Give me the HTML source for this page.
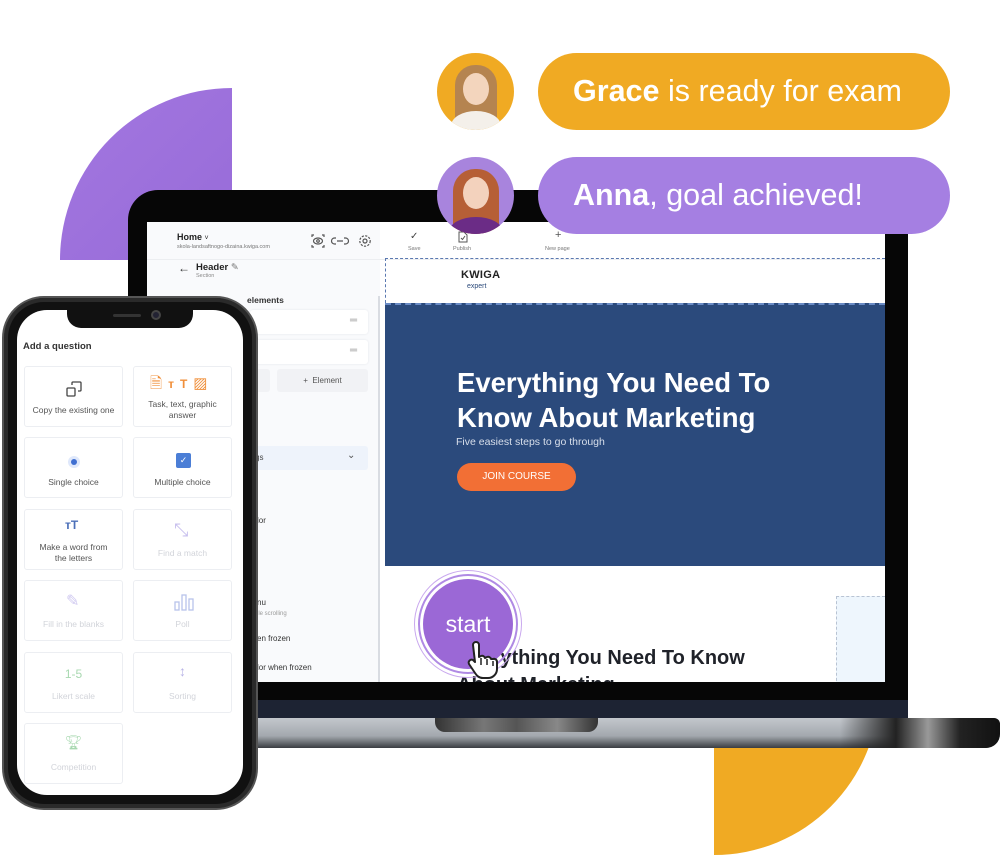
<!DOCTYPE html>
<html><head><meta charset="utf-8"><style>
*{margin:0;padding:0;box-sizing:border-box}
body{width:1000px;height:853px;background:#fff;position:relative;overflow:hidden;font-family:"Liberation Sans",sans-serif}
.a{position:absolute}
.t{position:absolute;white-space:nowrap}
.card{position:absolute;width:99px;height:61px;border:1px solid #eceef2;border-radius:3px;background:#fff;text-align:center;font-size:8.5px;color:#555}
.card .lb{position:absolute;left:0;right:0;line-height:11px}
.faded{color:#d2d4da}
.side{font-size:8px;color:#333}
</style></head><body>
<!-- purple quarter -->
<div class="a" style="left:60px;top:88px;width:344px;height:344px;border-radius:50%;background:linear-gradient(135deg,#a377e0,#8b5fd0);clip-path:inset(0 172px 172px 0)"></div>
<!-- orange quarter -->
<div class="a" style="left:549px;top:525px;width:330px;height:330px;border-radius:50%;background:#f0aa23;clip-path:inset(223px 0 0 165px)"></div>

<!-- laptop base -->
<div class="a" style="left:200px;top:718px;width:800px;height:30px;border-radius:0 6px 14px 0;background:linear-gradient(#c3c7cc,#a3a8ae 60%,#3a3d42);"></div>
<div class="a" style="left:840px;top:718px;width:160px;height:30px;border-radius:0 6px 14px 0;background:linear-gradient(90deg,rgba(0,0,0,0),#222 35%,#999 55%,#222 75%,#111)"></div>
<div class="a" style="left:435px;top:718px;width:163px;height:14px;border-radius:0 0 10px 10px;background:linear-gradient(90deg,#333,#777 30%,#555 50%,#888 75%,#333)"></div>
<!-- laptop body -->
<div class="a" style="left:128px;top:190px;width:780px;height:528px;background:#060606;border-radius:30px 30px 0 0"></div>
<div class="a" style="left:128px;top:700px;width:780px;height:18px;background:#1d2333"></div>
<!-- screen -->
<div class="a" style="left:147px;top:222px;width:738px;height:460px;background:#fff;overflow:hidden">
 <div class="a" style="left:0;top:0;width:233px;height:460px;background:#f9fafc"></div>
 <div class="a" style="left:231px;top:74px;width:2px;height:386px;background:#d9dce2"></div>
 <div class="t" style="left:30px;top:10px;font-size:9px;font-weight:bold;color:#222">Home <span style="font-weight:normal;font-size:7px">˅</span></div>
 <div class="t" style="left:30px;top:22px;font-size:5.5px;color:#777">skola-landsaftnogo-dizaina.kwiga.com</div>
 <svg class="a" style="left:164px;top:12px" width="70" height="14" viewBox="0 0 70 14" fill="none" stroke="#555" stroke-width="1.2"><path d="M1 3V1h2M11 1h2v2M13 11v2h-2M3 13H1v-2"/><ellipse cx="7" cy="7" rx="4.5" ry="3"/><circle cx="7" cy="7" r="1.3"/><path d="M26 7h6M25 4h-1.5a3 3 0 0 0 0 6H25M33 4h1.5a3 3 0 0 1 0 6H33"/><circle cx="54" cy="7" r="2"/><circle cx="54" cy="7" r="5.2" stroke-dasharray="2.2 1.3"/></svg>
 <div class="a" style="left:0;top:37px;width:738px;height:1px;background:#eceef1"></div>
 <div class="t" style="left:31px;top:39px;font-size:12px;color:#333">←</div>
 <div class="t" style="left:49px;top:40px;font-size:9.5px;font-weight:bold;color:#222">Header <span style="font-weight:normal;color:#777">✎</span></div>
 <div class="t" style="left:49px;top:51px;font-size:5.5px;color:#888">Section</div>
 <div class="t" style="left:100px;top:73px;font-size:8.5px;font-weight:bold;color:#333">elements</div>
 <div class="a" style="left:103px;top:88px;width:118px;height:24px;background:#fff;border-radius:3px;box-shadow:0 0 2px #e3e5ea"></div>
 <div class="t" style="left:203px;top:93px;font-size:10px;color:#999">═</div>
 <div class="a" style="left:103px;top:118px;width:118px;height:24px;background:#fff;border-radius:3px;box-shadow:0 0 2px #e3e5ea"></div>
 <div class="t" style="left:203px;top:123px;font-size:10px;color:#999">═</div>
 <div class="a" style="left:103px;top:147px;width:20px;height:23px;background:#f1f2f5;border-radius:3px"></div>
 <div class="a" style="left:130px;top:147px;width:91px;height:23px;background:#f1f2f5;border-radius:3px;font-size:8px;color:#555;text-align:center;line-height:23px">+&nbsp;&nbsp;Element</div>
 <div class="a" style="left:103px;top:224px;width:118px;height:24px;background:#eef3fb;border-radius:3px"></div>
 <div class="t" style="left:108px;top:231px;font-size:8px;color:#444">gs</div>
 <div class="t" style="left:200px;top:228px;font-size:10px;color:#555">⌄</div>
 <div class="t side" style="left:110px;top:294px">lor</div>
 <div class="t side" style="left:110px;top:376px">nu</div>
 <div class="t" style="left:110px;top:389px;font-size:6px;color:#999">ile scrolling</div>
 <div class="t side" style="left:110px;top:412px">en frozen</div>
 <div class="t side" style="left:110px;top:441px">lor when frozen</div>
 <div class="t" style="left:263px;top:9px;font-size:10px;color:#444">✓</div>
 <div class="t" style="left:261px;top:24px;font-size:5.5px;color:#777">Save</div>
 <svg class="a" style="left:311px;top:9px" width="10" height="12" viewBox="0 0 10 12" fill="none" stroke="#555"><path d="M1 1h5l3 3v7H1z"/><path d="M3 7l1.5 1.5L7 5"/></svg>
 <div class="t" style="left:306px;top:24px;font-size:5.5px;color:#777">Publish</div>
 <div class="t" style="left:408px;top:7px;font-size:11px;color:#555">+</div>
 <div class="t" style="left:398px;top:24px;font-size:5.5px;color:#777">New page</div>
 <div class="a" style="left:238px;top:36px;width:500px;height:45px;border-top:1.5px dashed #5a78b0;border-left:1.5px dashed #5a78b0"></div>
 <div class="t" style="left:314px;top:47px;font-size:11px;font-weight:bold;color:#222;letter-spacing:0.3px">KWIGA</div>
 <div class="t" style="left:320px;top:61px;font-size:7px;color:#2c4a7a">expert</div>
 <div class="a" style="left:238px;top:81px;width:500px;height:263px;background:#2b4a7c;border-top:2px dashed #6a8bc5"></div>
 <div class="t" style="left:310px;top:143px;font-size:27.5px;font-weight:bold;color:#fff;line-height:35px">Everything You Need To<br>Know About Marketing</div>
 <div class="t" style="left:309px;top:214px;font-size:10.5px;color:#d8dfeb">Five easiest steps to go through</div>
 <div class="a" style="left:310px;top:241px;width:119px;height:28px;border-radius:14px;background:#f26f35;color:#fff;font-size:10px;text-align:center;line-height:28px">JOIN COURSE</div>
 <div class="a" style="left:689px;top:374px;width:49px;height:90px;background:#eef6fd;border-left:1px dashed #b8c3d3;border-top:1px dashed #b8c3d3"></div>
 <div class="t" style="left:310px;top:423px;font-size:20px;font-weight:bold;color:#1f2229;line-height:27px">Everything You Need To Know<br>About Marketing</div>
</div>
<!-- start button -->
<div class="a" style="left:414px;top:570px;width:108px;height:108px;border-radius:50%;border:1px solid #c9a8ee"></div>
<div class="a" style="left:418px;top:574px;width:100px;height:100px;border-radius:50%;border:2px solid #b08ae4"></div>
<div class="a" style="left:423px;top:579px;width:90px;height:90px;border-radius:50%;background:#9b68d6;color:#fff;font-size:23px;text-align:center;line-height:90px">start</div>
<svg class="a" style="left:463px;top:641px" width="40" height="40" viewBox="0 0 40 40"><path d="M10 4a3 3 0 0 1 6 0v12l2-1a3 3 0 0 1 4 2l2-1a3 3 0 0 1 4 2l2 0a3 3 0 0 1 4 3v7c0 5-4 9-9 9h-5c-4 0-6-2-8-5l-6-9a3 3 0 0 1 4-4l2 2z" fill="#fff" stroke="#222" stroke-width="2" stroke-linejoin="round"/><path d="M18 17v7M24 18v6M30 20v5" stroke="#222" stroke-width="1.5"/></svg>

<!-- phone -->
<div class="a" style="left:2px;top:296px;width:256px;height:514px;border-radius:42px;background:#111;border:2px solid #555;box-shadow:inset 0 0 0 4px #2a2a2a"></div>
<div class="a" style="left:17px;top:310px;width:226px;height:485px;border-radius:30px;background:#fff"></div>
<div class="a" style="left:67px;top:302px;width:126px;height:26px;border-radius:0 0 14px 14px;background:#111"></div>
<div class="a" style="left:113px;top:314px;width:28px;height:3px;border-radius:2px;background:#333"></div>
<div class="a" style="left:151px;top:310px;width:10px;height:10px;border-radius:50%;background:#223;border:2px solid #444"></div>
<div class="t" style="left:23px;top:341px;font-size:9.5px;font-weight:bold;color:#333">Add a question</div>

<div class="card" style="left:24px;top:366px"><svg class="a" style="left:40px;top:13px" width="18" height="18" viewBox="0 0 18 18" fill="none" stroke="#444" stroke-width="1.3"><rect x="2" y="8" width="8" height="8" rx="1"/><path d="M7 5V3a1 1 0 0 1 1-1h7a1 1 0 0 1 1 1v7a1 1 0 0 1-1 1h-2"/></svg><div class="lb" style="top:38px">Copy the existing one</div></div>
<div class="card" style="left:133px;top:366px"><div class="a" style="left:16px;top:6px;font-size:15px;color:#f08f3a;letter-spacing:6px">🗎<span style="font-size:12px;font-weight:bold">ᴛT</span>▨</div><div class="lb" style="top:32px">Task, text, graphic<br>answer</div></div>
<div class="card" style="left:24px;top:437px"><div class="a" style="left:43px;top:18px;width:12px;height:12px;border-radius:50%;background:#dfe8fb"></div><div class="a" style="left:46px;top:21px;width:6px;height:6px;border-radius:50%;background:#3f6fd1"></div><div class="lb" style="top:39px">Single choice</div></div>
<div class="card" style="left:133px;top:437px"><div class="a" style="left:42px;top:15px;width:15px;height:15px;border-radius:2px;background:#4b7ed6;color:#fff;font-size:9px;line-height:15px">✓</div><div class="lb" style="top:39px">Multiple choice</div></div>
<div class="card" style="left:24px;top:509px"><div class="a" style="left:40px;top:8px;font-size:12px;font-weight:bold;color:#4b6fb8">ᴛT</div><div class="lb" style="top:32px">Make a word from<br>the letters</div></div>
<div class="card faded" style="left:133px;top:509px"><div class="a" style="left:40px;top:10px;font-size:18px;color:#c8c0ee">⤡</div><div class="lb" style="top:38px">Find a match</div></div>
<div class="card faded" style="left:24px;top:580px"><div class="a" style="left:41px;top:10px;font-size:16px;color:#cfc8f0">✎</div><div class="lb" style="top:38px">Fill in the blanks</div></div>
<div class="card faded" style="left:133px;top:580px"><svg class="a" style="left:40px;top:12px" width="20" height="18" viewBox="0 0 20 18" fill="none" stroke="#b8c4ea" stroke-width="1.3"><rect x="1" y="9" width="4" height="8"/><rect x="8" y="2" width="4" height="15"/><rect x="15" y="6" width="4" height="11"/></svg><div class="lb" style="top:38px">Poll</div></div>
<div class="card faded" style="left:24px;top:652px"><div class="a" style="left:0;right:0;top:14px;font-size:12px;color:#a8d8b0">1-5</div><div class="lb" style="top:38px">Likert scale</div></div>
<div class="card faded" style="left:133px;top:652px"><div class="a" style="left:0;right:0;top:10px;font-size:14px;color:#b8b4e6">↕</div><div class="lb" style="top:38px">Sorting</div></div>
<div class="card faded" style="left:24px;top:723px"><div class="a" style="left:0;right:0;top:10px;font-size:14px;color:#a8d8b0">🏆︎</div><div class="lb" style="top:38px">Competition</div></div>

<!-- bubbles -->
<div class="a" style="left:437px;top:53px;width:77px;height:77px;border-radius:50%;overflow:hidden;background:#f0aa23">
 <div class="a" style="left:18px;top:12px;width:42px;height:62px;border-radius:20px 20px 10px 10px;background:#b58450"></div>
 <div class="a" style="left:26px;top:20px;width:26px;height:32px;border-radius:50%;background:#f3d5bd"></div>
 <div class="a" style="left:14px;top:58px;width:50px;height:30px;border-radius:50% 50% 0 0;background:#f4f0ea"></div>
</div>
<div class="a" style="left:538px;top:53px;width:412px;height:77px;border-radius:39px;background:#f0aa23;color:#fff;font-size:30.5px;line-height:77px;padding-left:35px">
<b>Grace</b> is ready for exam</div>
<div class="a" style="left:437px;top:157px;width:77px;height:77px;border-radius:50%;overflow:hidden;background:#a884dd">
 <div class="a" style="left:16px;top:12px;width:46px;height:66px;border-radius:22px 22px 10px 10px;background:#b65f36"></div>
 <div class="a" style="left:26px;top:20px;width:26px;height:32px;border-radius:50%;background:#f3d2bd"></div>
 <div class="a" style="left:12px;top:60px;width:54px;height:30px;border-radius:50% 50% 0 0;background:#6b2c86"></div>
</div>
<div class="a" style="left:538px;top:157px;width:412px;height:77px;border-radius:39px;background:#a57fe2;color:#fff;font-size:30.5px;line-height:77px;padding-left:35px">
<b>Anna</b>, goal achieved!</div>
</body></html>
